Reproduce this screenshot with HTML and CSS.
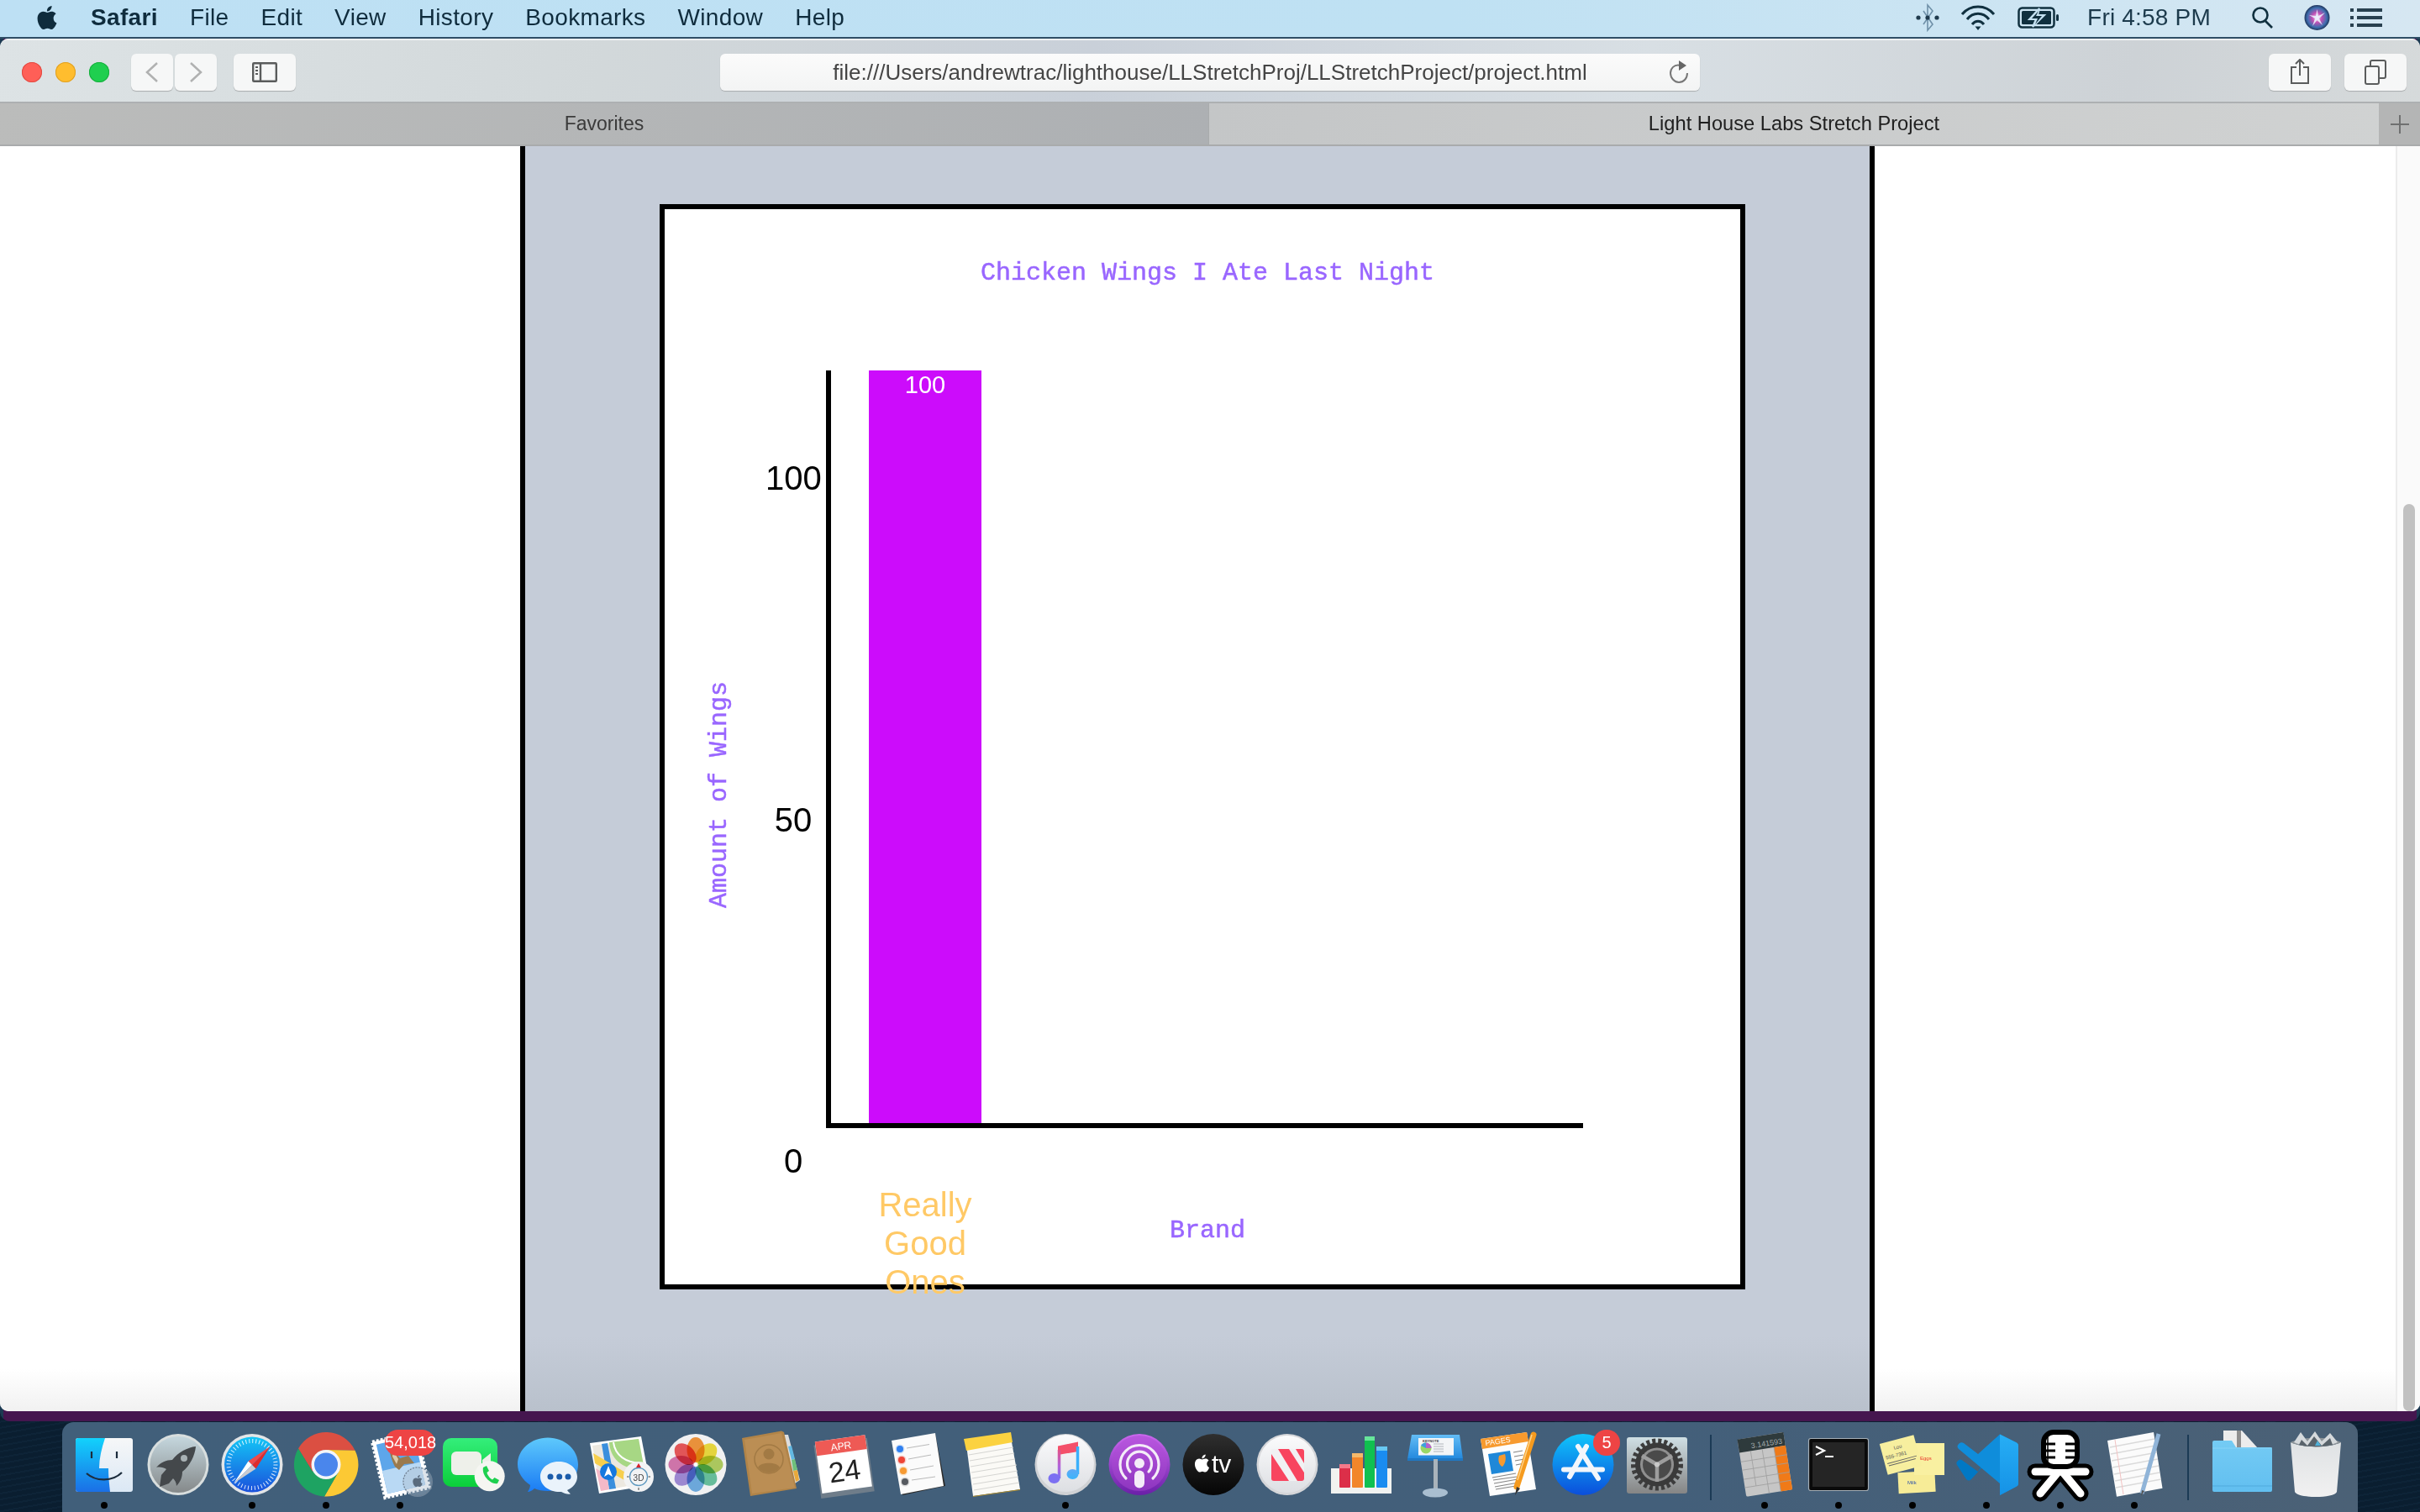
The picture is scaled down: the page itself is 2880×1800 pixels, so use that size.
FILE: index.html
```html
<!DOCTYPE html>
<html lang="en">
<head>
<meta charset="utf-8">
<title>Light House Labs Stretch Project</title>
<link rel="stylesheet" href="styles.css">
</head>
<body>
<svg class="defs" aria-hidden="true">
  <defs>
    <symbol id="apple" viewBox="0 0 24 24"><path d="M12.152 6.896c-.948 0-2.415-1.078-3.96-1.04-2.04.027-3.91 1.183-4.961 3.014-2.117 3.675-.546 9.103 1.519 12.09 1.013 1.454 2.208 3.09 3.792 3.039 1.52-.065 2.09-.987 3.935-.987 1.831 0 2.35.987 3.96.948 1.637-.026 2.676-1.48 3.676-2.948 1.156-1.688 1.636-3.325 1.662-3.415-.039-.013-3.182-1.221-3.22-4.857-.026-3.04 2.48-4.494 2.597-4.559-1.429-2.09-3.623-2.324-4.39-2.376-2-.156-3.675 1.09-4.61 1.09zM15.53 3.83c.843-1.012 1.4-2.427 1.245-3.83-1.207.052-2.662.805-3.532 1.818-.78.896-1.454 2.338-1.273 3.714 1.338.104 2.715-.688 3.559-1.701"/></symbol>
    <linearGradient id="gFinder" x1="0" y1="0" x2="0" y2="1"><stop offset="0" stop-color="#12d2fc"/><stop offset="1" stop-color="#1b6fe6"/></linearGradient>
    <linearGradient id="gFinderR" x1="0" y1="0" x2="0" y2="1"><stop offset="0" stop-color="#f6f7f8"/><stop offset="1" stop-color="#dbe8f5"/></linearGradient>
    <linearGradient id="gRocket" x1="0" y1="0" x2="0" y2="1"><stop offset="0" stop-color="#c5d7de"/><stop offset="1" stop-color="#85898a"/></linearGradient>
    <linearGradient id="gSafari" x1="0" y1="0" x2="0" y2="1"><stop offset="0" stop-color="#14c6f6"/><stop offset="1" stop-color="#1a50dc"/></linearGradient>
    <linearGradient id="gFace" x1="0" y1="0" x2="0" y2="1"><stop offset="0" stop-color="#34ee7b"/><stop offset="1" stop-color="#0bce3a"/></linearGradient>
    <linearGradient id="gMsg" x1="0" y1="0" x2="0" y2="1"><stop offset="0" stop-color="#5ec9fc"/><stop offset="1" stop-color="#1a7bf4"/></linearGradient>
    <linearGradient id="gNote" gradientUnits="userSpaceOnUse" x1="40" y1="18" x2="34" y2="66"><stop offset="0" stop-color="#f74a62"/><stop offset="0.55" stop-color="#b463d8"/><stop offset="1" stop-color="#6f7cf8"/></linearGradient>
    <linearGradient id="gNote2" x1="0" y1="0" x2="0" y2="1"><stop offset="0" stop-color="#5fa8f5"/><stop offset="1" stop-color="#3bb5fb"/></linearGradient>
    <linearGradient id="gPod" x1="0" y1="0" x2="0" y2="1"><stop offset="0" stop-color="#cb68ee"/><stop offset="1" stop-color="#6a1fa8"/></linearGradient>
    <linearGradient id="gTv" x1="0" y1="0" x2="0" y2="1"><stop offset="0" stop-color="#2f2f2f"/><stop offset="1" stop-color="#050505"/></linearGradient>
    <linearGradient id="gWhite" x1="0" y1="0" x2="0" y2="1"><stop offset="0" stop-color="#fbfbfc"/><stop offset="1" stop-color="#dddfe3"/></linearGradient>
    <linearGradient id="gStore" x1="0" y1="0" x2="0" y2="1"><stop offset="0" stop-color="#10c6fb"/><stop offset="1" stop-color="#0b4edb"/></linearGradient>
    <linearGradient id="gPrefs" x1="0" y1="0" x2="0" y2="1"><stop offset="0" stop-color="#cfdfe4"/><stop offset="1" stop-color="#858585"/></linearGradient>
    <linearGradient id="gFolder" x1="0" y1="0" x2="0" y2="1"><stop offset="0" stop-color="#74cbf4"/><stop offset="1" stop-color="#62bff0"/></linearGradient>
    <linearGradient id="gKey" x1="0" y1="0" x2="0" y2="1"><stop offset="0" stop-color="#63bdf6"/><stop offset="1" stop-color="#2288dd"/></linearGradient>
    <radialGradient id="gSiri" cx="0.5" cy="0.5" r="0.55"><stop offset="0" stop-color="#e8d8f2"/><stop offset="0.35" stop-color="#c24fb4"/><stop offset="0.7" stop-color="#3f6fb0"/><stop offset="1" stop-color="#121c38"/></radialGradient>
    <linearGradient id="gVs" x1="0" y1="0" x2="0" y2="1"><stop offset="0" stop-color="#27aef5"/><stop offset="1" stop-color="#1592e6"/></linearGradient>
    <linearGradient id="gTrash" x1="0" y1="0" x2="0" y2="1"><stop offset="0" stop-color="#dfe2e4"/><stop offset="1" stop-color="#f1f1f1"/></linearGradient>
  </defs>
</svg>

<header class="menubar">
  <svg class="apple-logo" viewBox="0 0 24 24"><use href="#apple"/></svg>
  <span class="menu-app">Safari</span>
  <nav class="menu-items"><span>File</span><span>Edit</span><span>View</span><span>History</span><span>Bookmarks</span><span>Window</span><span>Help</span></nav>
  <div class="status">
    <svg class="st-bt" viewBox="0 0 30 34" fill="none"><path d="M10 9 L21 25 L15 32 V2 L21 9 L10 25" stroke="#6f90a8" stroke-width="1.6"/><circle cx="4" cy="17" r="2.6" fill="#1f3a4d"/><circle cx="15" cy="17" r="2.6" fill="#1f3a4d"/><circle cx="26" cy="17" r="2.6" fill="#1f3a4d"/></svg>
    <svg class="st-wifi" viewBox="0 0 42 30" fill="none" stroke="#10303f" stroke-width="3"><path d="M2 11 C12 -1 30 -1 40 11"/><path d="M8 17 C15 8 27 8 34 17"/><path d="M14 23 C18 18 24 18 28 23"/><path d="M17.500 25.500 L21 30 L24.500 25.500 Z" fill="#10303f" stroke="none"/></svg>
    <svg class="st-batt" viewBox="0 0 50 26" fill="none"><rect x="1.500" y="1.500" width="42" height="23" rx="4" stroke="#10303f" stroke-width="2.500"/><rect x="5" y="5" width="35" height="16" rx="1.500" fill="#10303f"/><path d="M26 2 L14 15 H22 L18 24 L32 10 H24 Z" fill="#c4e1f1" stroke="#c4e1f1" stroke-width="2"/><path d="M25 5 L17 14 H24 L21 21 L29 11 H22 Z" fill="#10303f"/><rect x="46" y="9" width="3" height="8" rx="1.500" fill="#10303f"/></svg>
    <span class="st-time">Fri 4:58 PM</span>
    <svg class="st-search" viewBox="0 0 30 26" fill="none" stroke="#10303f" stroke-width="2.600"><circle cx="12" cy="10" r="8.500"/><path d="M18 17 L26 25"/></svg>
    <svg class="st-siri" viewBox="0 0 31 32"><circle cx="15.500" cy="16" r="15" fill="url(#gSiri)"/><path d="M15.500 6 L17 14 L25 10 L18 17 L22 25 L15.500 19 L10 26 L13 17 L6 13 L14 14 Z" fill="#eef6ff" opacity=".85"/></svg>
    <svg class="st-list" viewBox="0 0 38 24" fill="#28404f"><rect x="0" y="1" width="4" height="4"/><rect x="8" y="1" width="30" height="4"/><rect x="0" y="10" width="4" height="4"/><rect x="8" y="10" width="30" height="4"/><rect x="0" y="19" width="4" height="4"/><rect x="8" y="19" width="30" height="4"/></svg>
  </div>
</header>

<div class="stage">
  <div class="window">
    <div class="toolbar">
      <div class="tb-left">
        <div class="lights"><i class="light red"></i><i class="light yellow"></i><i class="light green"></i></div>
        <div class="navs">
          <button class="btn nav"><svg viewBox="0 0 16 26" fill="none" stroke="#b0b1b1" stroke-width="2.500"><path d="M14 2 L2 13 L14 24"/></svg></button>
          <button class="btn nav"><svg viewBox="0 0 16 26" fill="none" stroke="#b0b1b1" stroke-width="2.500"><path d="M2 2 L14 13 L2 24"/></svg></button>
        </div>
        <button class="btn wide"><svg class="ic-side" viewBox="0 0 30 24" fill="none" stroke="#5a5c5c" stroke-width="2.400"><rect x="1.200" y="1.200" width="27.600" height="21.600" rx="1"/><path d="M10 1 V23"/><path d="M4 6 H7 M4 10 H7 M4 14 H7" stroke-width="1.800"/></svg></button>
      </div>
      <div class="urlbar">
        <span class="url">file:///Users/andrewtrac/lighthouse/LLStretchProj/LLStretchProject/project.html</span>
        <svg class="reload" viewBox="0 0 24 28" fill="none"><path d="M14 6 C6 4 2 10 2 15 C2 21 7 26 12 26 C18 26 22 21 22 15" stroke="#777" stroke-width="2"/><path d="M12 0 L21 6 L12 12 Z" fill="#666"/></svg>
      </div>
      <div class="tb-right">
        <button class="btn wide"><svg class="ic-share" viewBox="0 0 24 30" fill="none" stroke="#5a5c5c" stroke-width="2"><path d="M8 10 H2 V29 H22 V10 H16"/><path d="M12 20 V1 M7 6 L12 1 L17 6"/></svg></button>
        <button class="btn wide"><svg class="ic-tabs" viewBox="0 0 26 30" fill="none" stroke="#5a5c5c" stroke-width="2"><rect x="1" y="8" width="16" height="21" rx="2"/><path d="M7 7 V3 A2 2 0 0 1 9 1 H23 A2 2 0 0 1 25 3 V20 A2 2 0 0 1 23 22 H18"/></svg></button>
      </div>
    </div>
    <div class="tabbar">
      <div class="tab">Favorites</div>
      <div class="tab active">Light House Labs Stretch Project</div>
      <div class="tab-add"><svg viewBox="0 0 22 22" stroke="#6f7070" stroke-width="2"><path d="M11 0 V22 M0 11 H22"/></svg></div>
    </div>
    <main class="viewport">
      <div class="page-wrap">
        <section class="page">
          <div class="card">
            <div class="corner"></div>
            <h1 class="chart-title">Chicken Wings I Ate Last Night</h1>
            <div class="y-side">
              <div class="y-label">Amount of Wings</div>
              <div class="ticks"><span>100</span><span>50</span><span>0</span></div>
            </div>
            <div class="plot">
              <div class="bar">100</div>
            </div>
            <div class="corner"></div>
            <div class="x-side">
              <div class="x-label">Brand</div>
              <div class="bar-label">Really Good Ones</div>
            </div>
          </div>
        </section>
      </div>
      <aside class="scrollbar"><div class="thumb"></div></aside>
    </main>
  </div>
</div>

<div class="desk">
  <footer class="dock">
    <div class="tile on"><svg viewBox="0 0 88 88"><rect x="10" y="12" width="68" height="64" rx="3" fill="url(#gFinderR)"/><path d="M13 12 H45 C41 24 38 36 38 48 H49 C49 58 50 67 51 76 H13 A3 3 0 0 1 10 73 V15 A3 3 0 0 1 13 12 Z" fill="url(#gFinder)"/><path d="M29 28 V36 M59 28 V36" stroke="#1c2c3c" stroke-width="2.200" fill="none"/><path d="M23 54 C34 64 54 64 65 53" stroke="#1c2c3c" stroke-width="2.200" fill="none"/></svg></div>
    <div class="tile"><svg viewBox="0 0 88 88"><circle cx="44" cy="43.500" r="36.500" fill="#d8dede"/><circle cx="44" cy="43.500" r="33.500" fill="url(#gRocket)"/><path d="M65 22 C55 23 44 29 37 38 C30 38 23 41 18 47 C22 46 27 47 30 49 L24 56 L22 70 L33 66 L38 60 C40 62 42 65 42 69 C47 64 49 58 49 52 C58 45 64 33 65 22 Z" fill="#44484b"/><circle cx="51" cy="36" r="4" fill="#a8b1b4"/></svg></div>
    <div class="tile on"><svg viewBox="0 0 88 88"><circle cx="44" cy="43.500" r="36.500" fill="#e3e5e7"/><circle cx="44" cy="43.500" r="33" fill="url(#gSafari)"/><circle cx="44" cy="43.500" r="28" fill="none" stroke="#fff" stroke-width="5" stroke-dasharray="1 3" opacity=".85"/><polygon points="65.700,21.700 48.500,48.500 44,44" fill="#e02b2b"/><polygon points="65.700,21.700 44,44 39.500,39.500" fill="#f04a4a"/><polygon points="22,66 39.500,39.500 44,44" fill="#fff"/><polygon points="22,66 44,44 48.500,48.500" fill="#c9cbd0"/></svg></div>
    <div class="tile on"><svg viewBox="0 0 88 88"><path d="M44 26 L78.500 26.700 A38 38 0 0 0 11 24.500 L28 52 Z" fill="#db4f42"/><path d="M78.500 26.700 A38 38 0 0 1 42 81.500 L59 52 L44 26 Z" fill="#fcc934"/><path d="M11 24.500 A38 38 0 0 0 42 81.500 L59 52 L28 52 Z" fill="#1ea362"/><circle cx="44" cy="43.500" r="17.500" fill="#f4f5f8"/><circle cx="44" cy="43.500" r="14" fill="#4a86ec"/></svg></div>
    <div class="tile on">
      <svg viewBox="0 0 88 88"><g transform="rotate(-13 44 44)"><rect x="18" y="10" width="54" height="68" fill="#fff" stroke="#fff" stroke-width="4" stroke-dasharray="3 2"/><rect x="22" y="14" width="46" height="60" fill="#5da6ea"/><rect x="22" y="46" width="46" height="28" fill="#b9d9f4"/></g><path d="M30 16 C33 20 35 25 38 29 L44 36 L54 33 L61 42 L49 43 L43 50 L38 46 C34 38 31 28 30 16 Z" fill="#9a7a4e"/><path d="M36 27 L42 37 L40 43 L35 34 Z" fill="#dccaa9"/><circle cx="65" cy="64" r="18" fill="#a9bccd" opacity=".4"/><circle cx="65" cy="64" r="17" fill="none" stroke="#6d7f92" stroke-width="1.200" stroke-dasharray="2 1.500"/><use href="#apple" x="58" y="56" width="14" height="14" fill="#5a6b7d"/></svg>
      <span class="badge mail-badge">54,018</span>
    </div>
    <div class="tile"><svg viewBox="0 0 88 88"><rect x="7" y="12" width="65" height="58" rx="10" fill="url(#gFace)"/><rect x="17" y="28" width="36" height="28" rx="6" fill="#eef0ea"/><path d="M54 38 L64 30 V56 L54 48 Z" fill="#eef0ea"/><circle cx="62.700" cy="57.300" r="18" fill="#f5f6f2"/><path d="M55 47 L59 45 L62 51 L59.500 53 C60 56 63 60 66 61.500 L68.500 59 L74 62 L72 66 C65 68 53 57 55 47 Z" fill="#1ed04f"/></svg></div>
    <div class="tile"><svg viewBox="0 0 88 88"><path d="M44 11.500 C64 11.500 80 25.500 80 43.500 C80 61 64 75 44 75 C38 75 32 74 28 72 C25 75 21 76.500 20 76 C22 73 23 70 23 68 C14 62 8 53 8 43.500 C8 25.500 24 11.500 44 11.500 Z" fill="url(#gMsg)"/><path d="M57 40 C69 40 79 47.500 79 58 C79 65 74 71 67 74 C68 76 70 77 71 78.500 C68 79 63 78 60 76 C47 77 35 69 35 58 C35 47.500 45 40 57 40 Z" fill="#eaf3fb"/><circle cx="47" cy="58" r="3.500" fill="#1a5cab"/><circle cx="57.700" cy="58" r="3.500" fill="#1a5cab"/><circle cx="68" cy="58" r="3.500" fill="#1a5cab"/></svg></div>
    <div class="tile"><svg viewBox="0 0 88 88"><polygon points="6,18 67,10 78,68 17,78" fill="#fff"/><polygon points="9,21 64,13 74,65 19,75" fill="#ece8e0"/><path d="M29 17 C30 36 44 50 71 50 L64 13 Z" fill="#a7d784"/><path d="M34 17 C36 32 48 42 69 42" stroke="#fff" fill="none" stroke-width="2"/><polygon points="20,19 27,18 37,72 29,73" fill="#3a8fdd"/><polygon points="10,30 50,54 47,62 12,42" fill="#f7cf4e"/><polygon points="13,48 26,56 29,73 19,75" fill="#f5b9c8"/><circle cx="28" cy="52" r="10" fill="#1478e0"/><path d="M28 45 L33 58 L28 55 L23 58 Z" fill="#fff"/><circle cx="64" cy="58" r="18" fill="#f2f3f4"/><circle cx="64" cy="58" r="10.500" fill="none" stroke="#5d98bf" stroke-width="1.300"/><text class="t-3d" x="64" y="62.500" text-anchor="middle">3D</text><polygon points="64,42 67,47 61,47" fill="#d8222a"/><path d="M50 58 H52.500 M75.500 58 H78 M64 71 V74" stroke="#444" stroke-width="1"/></svg></div>
    <div class="tile"><svg viewBox="0 0 88 88"><circle cx="44" cy="43.500" r="36.500" fill="#f1f1f2"/><g class="petals"><ellipse cx="44" cy="26" rx="10.500" ry="15" fill="#f79a3e"/><ellipse cx="44" cy="26" rx="10.500" ry="15" fill="#f2e141" transform="rotate(45 44 43.500)"/><ellipse cx="44" cy="26" rx="10.500" ry="15" fill="#b5d363" transform="rotate(90 44 43.500)"/><ellipse cx="44" cy="26" rx="10.500" ry="15" fill="#6cc7a2" transform="rotate(135 44 43.500)"/><ellipse cx="44" cy="26" rx="10.500" ry="15" fill="#72b1e6" transform="rotate(180 44 43.500)"/><ellipse cx="44" cy="26" rx="10.500" ry="15" fill="#a48fdb" transform="rotate(225 44 43.500)"/><ellipse cx="44" cy="26" rx="10.500" ry="15" fill="#da7bb2" transform="rotate(270 44 43.500)"/><ellipse cx="44" cy="26" rx="10.500" ry="15" fill="#ee5a5c" transform="rotate(315 44 43.500)"/></g><circle cx="44" cy="43.500" r="1.800" fill="#fff"/></svg></div>
    <div class="tile"><svg viewBox="0 0 88 88"><polygon points="58,8 66,8 80,62 74,66" fill="#ddd"/><polygon points="66,22 70,21 74,37 70,38" fill="#63b9e3"/><polygon points="70,38 74,37 77,50 72,51" fill="#6ec07b"/><polygon points="72,51 77,50 79,62 75,64" fill="#e9a93a"/><polygon points="11,12 58,3.500 61,5 76,72 21,81" fill="#b18448"/><polygon points="14,14 58,6 74,71 23,78" fill="#bb8e54"/><circle cx="43" cy="37" r="17" fill="none" stroke="#a27a44" stroke-width="1.500"/><circle cx="43" cy="31" r="6.500" fill="#a27a44"/><path d="M30 47 C33 40 53 40 56 47 A17 17 0 0 1 30 47 Z" fill="#a27a44"/></svg></div>
    <div class="tile"><svg viewBox="0 0 88 88"><g transform="rotate(-8 44 44)"><rect x="12" y="16" width="64" height="64" fill="#6f7d8a"/><rect x="14" y="12" width="60" height="62" fill="#fff"/><rect x="14" y="12" width="60" height="17" fill="#ee5a55"/><text class="t-apr" x="44" y="25.500" text-anchor="middle">APR</text><text class="t-cal" x="44" y="63" text-anchor="middle">24</text></g></svg></div>
    <div class="tile"><svg viewBox="0 0 88 88"><polygon points="16,17 65,6.500 77,69 26,80" fill="#2a2a2a"/><polygon points="13,15 65,6 75,69 24,79" fill="#fbfbfb"/><circle cx="23" cy="25" r="5.500" fill="#cfe0f5"/><circle cx="23" cy="25" r="4" fill="#2f7ff0"/><circle cx="25" cy="38" r="5.500" fill="#f7d0cc"/><circle cx="25" cy="38" r="4" fill="#ef4537"/><circle cx="27" cy="51" r="5.500" fill="#fbe2c4"/><circle cx="27" cy="51" r="4" fill="#f69a33"/><circle cx="29" cy="64" r="5.500" fill="#dadada"/><circle cx="29" cy="64" r="4" fill="#565a60"/><path d="M31 24 L58 19.500 M33 37 L60 32 M35 50 L63 45 M37 62 L65 58" stroke="#b9b9b9" stroke-width="1"/></svg></div>
    <div class="tile"><svg viewBox="0 0 88 88"><polygon points="14,20 67,11 78,73 22,81" fill="#fbfaf6"/><polygon points="22,81 78,73 78,74 22,82" fill="#b08f30"/><polygon points="11,13 67,5 69,17 14,27" fill="#fbd240"/><path d="M17 32 L70 23 M18 39 L71 30 M19 46 L72 37 M20 53 L74 44 M21 60 L75 51 M22 67 L76 58 M23 74 L77 65" stroke="#d5d5d2" stroke-width="1"/></svg></div>
    <div class="tile on"><svg viewBox="0 0 88 88"><circle cx="44" cy="43.500" r="36.500" fill="#cfd1d4"/><circle cx="44" cy="42" r="34" fill="url(#gWhite)"/><path d="M35 21.500 L59 16.500 V28 L35 32 Z" fill="#f4506a"/><path d="M36.500 26 V60" fill="none" stroke="url(#gNote)" stroke-width="3.500"/><path d="M58.500 22 V55" stroke="#3bb0fb" stroke-width="3.500"/><ellipse cx="30.500" cy="60" rx="7" ry="6" fill="#7c70f2"/><ellipse cx="52.500" cy="55" rx="7" ry="6" fill="url(#gNote2)"/></svg></div>
    <div class="tile"><svg viewBox="0 0 88 88"><circle cx="44" cy="43.500" r="36.500" fill="url(#gPod)"/><circle cx="44" cy="42" r="33" fill="#a948d2" opacity=".5"/><g fill="none" stroke="#f4ecf8" stroke-width="3.200" stroke-linecap="round"><path d="M28 60 A23 23 0 1 1 60 60"/><path d="M33 52 A14.500 14.500 0 1 1 55 52"/></g><circle cx="44" cy="42" r="6" fill="#f4ecf8"/><rect x="38" y="50.500" width="12" height="21" rx="6" fill="#f4ecf8"/></svg></div>
    <div class="tile"><svg viewBox="0 0 88 88"><circle cx="44" cy="43.500" r="36.500" fill="url(#gTv)"/><use href="#apple" x="20" y="30" width="21" height="24" fill="#fff"/><text class="t-tv" x="42" y="53">tv</text></svg></div>
    <div class="tile"><svg viewBox="0 0 88 88"><circle cx="44" cy="43.500" r="36.500" fill="#d5d6d9"/><circle cx="44" cy="43" r="34" fill="url(#gWhite)"/><rect x="25" y="25" width="39" height="38" rx="3" fill="#f8455f"/><path d="M25 31 L46 63 H56 L33 25 H25 Z M46 25 L64 53 V42 L54 25 Z" fill="#f1f1f3"/></svg></div>
    <div class="tile"><svg viewBox="0 0 88 88"><rect x="8" y="48" width="72" height="30" fill="#f1f2f0"/><rect x="18" y="43" width="13" height="28" rx="1" fill="#dc2f49"/><rect x="18" y="43" width="13" height="5" fill="#f4798a"/><rect x="33" y="30" width="13" height="41" rx="1" fill="#f2862a"/><rect x="33" y="30" width="13" height="5" fill="#f5b96a"/><rect x="48" y="10" width="12" height="61" rx="1" fill="#10c050"/><rect x="48" y="10" width="12" height="5" fill="#66e69a"/><rect x="62" y="22" width="13" height="49" rx="1" fill="#1a8cf0"/><rect x="62" y="22" width="13" height="5" fill="#68c8f2"/></svg></div>
    <div class="tile"><svg viewBox="0 0 88 88"><polygon points="16,8 73,8 77,37 11,37" fill="url(#gKey)"/><rect x="11" y="36" width="66" height="3" fill="#1f78c4"/><rect x="24" y="12" width="42" height="20.500" fill="#f3f5f7"/><text class="t-key" x="29" y="16.500">KEYNOTE</text><circle cx="33" cy="24" r="6.500" fill="#9ad766"/><path d="M33 24 L33 17.500 A6.500 6.500 0 0 1 39.500 24 Z" fill="#b762cc"/><path d="M33 24 L27 21 A6.500 6.500 0 0 1 33 17.500 Z" fill="#3d9fdf"/><path d="M42 19 H54 M42 22 H54 M42 25 H54 M42 28 H54" stroke="#b1b5bb" stroke-width="1"/><rect x="42" y="37" width="5" height="36" fill="#a9b3bb"/><ellipse cx="44" cy="77" rx="15" ry="5.500" fill="#a9bed0"/></svg></div>
    <div class="tile"><svg viewBox="0 0 88 88"><polygon points="10,13 65,5 76,73 21,81" fill="#fdfdfd"/><polygon points="10,13 65,5 67,16 12,25" fill="#f79a2e"/><text class="t-pages" transform="rotate(-8 16 21)" x="16" y="21">PAGES</text><polygon points="19,31 45,27 49,51 23,55" fill="#1f88d8"/><path d="M32 33 L39 31 C41 37 39 43 36 46 C33 45 30 40 32 33 Z" fill="#f79a2e"/><path d="M49 29 L60 27 M50 34 L61 32 M51 39 L62 37 M52 44 L62 42 M24 59 L52 54 M25 62 L53 58 M26 66 L54 61 M27 70 L55 65 M28 73 L52 69" stroke="#858585" stroke-width="1.200"/><path d="M73 8 L53 70" stroke="#f59a1e" stroke-width="7" stroke-linecap="round"/><path d="M53 70 L51 80 L57 72 Z" fill="#333"/><path d="M71 8 L54 62" stroke="#fdd288" stroke-width="1.500"/></svg></div>
    <div class="tile">
      <svg viewBox="0 0 88 88"><circle cx="44" cy="43.500" r="36.500" fill="url(#gStore)"/><g stroke="#f2f6fb" stroke-width="6" stroke-linecap="round" fill="none"><path d="M48 22 L28 58"/><path d="M38 22 L62 60"/><path d="M21 49.500 H67"/></g></svg>
      <span class="badge store-badge">5</span>
    </div>
    <div class="tile"><svg viewBox="0 0 88 88"><rect x="8" y="11" width="72" height="67" rx="3" fill="url(#gPrefs)"/><circle cx="44" cy="43.500" r="28" fill="none" stroke="#3d3d3d" stroke-width="6" stroke-dasharray="4 3"/><circle cx="44" cy="43.500" r="26" fill="#3a3a3a"/><circle cx="44" cy="43.500" r="20" fill="#8f8f8f"/><circle cx="44" cy="43.500" r="17" fill="#4a4a4a"/><g stroke="#9d9d9d" stroke-width="4.500"><path d="M44 43.500 L44 64 M44 43.500 L26 33 M44 43.500 L62 33"/></g><circle cx="44" cy="43.500" r="3" fill="#c9c9c9"/></svg></div>
    <div class="sep"></div>
    <div class="tile on"><svg viewBox="0 0 88 88"><g transform="rotate(-9 44 43)"><rect x="16.500" y="9" width="55.500" height="69" rx="2" fill="#c6c6c6"/><rect x="16.500" y="9" width="55.500" height="16" fill="#2e3a3c"/><text class="t-calc" x="69" y="22" text-anchor="end">3.141593</text><rect x="58" y="25" width="14" height="53" fill="#f07a18"/><g stroke="#9f9f9f" stroke-width=".8"><path d="M16.500 36 H72 M16.500 46 H72 M16.500 57 H72 M16.500 67 H72 M30 25 V67 M44 25 V78 M58 25 V78"/></g></g></svg></div>
    <div class="tile on"><svg viewBox="0 0 88 88"><rect x="8.500" y="12.500" width="71" height="62" rx="2.500" fill="#0a0a0a" stroke="#a4aeb6" stroke-width="1.200"/><rect x="13" y="17" width="62" height="53" fill="#252525"/><path d="M17 22 L27 27 L17 32" stroke="#fff" stroke-width="2.200" fill="none"/><path d="M28 34 H38" stroke="#fff" stroke-width="2"/></svg></div>
    <div class="tile on"><svg viewBox="0 0 88 88"><rect x="27" y="52" width="44" height="25" fill="#f7ec97" transform="rotate(-3 49 64)"/><text class="t-stk t-blue" x="38" y="67">Milk</text><rect x="46" y="18" width="36" height="38" fill="#f9f0a1"/><text class="t-stk t-red" x="53" y="38">Eggs</text><g transform="rotate(-15 30 32)"><rect x="9" y="13" width="42" height="38" fill="#f7ef9f"/><text class="t-stk" x="24" y="24">Lou</text><text class="t-stk" x="12" y="33">555-7361</text><path d="M12 38 H48 M13 41 H46" stroke="#666" stroke-width="1"/></g></svg></div>
    <div class="tile on"><svg viewBox="0 0 88 88"><path d="M9 44 C8 42 8 41 10 39 C12 37 14 37 16 39 L34 52 L60 7.500 L60 24 L26 61 C24 63 22 63 20 61 Z" fill="#0078c4"/><path d="M60 7.500 L34 31 L17 18 C15 17 13 17 11 19 C9 21 9 23 11 25 L60 66 V80 L79 70 C81 69 82 68 82 66 V21 C82 19 81 18 79 17 Z" fill="#0f8ddb"/><path d="M60 7.500 L79 17 C81 18 82 19 82 21 V66 C82 68 81 69 79 70 L60 80 Z" fill="url(#gVs)"/></svg></div>
    <div class="tile on"><svg viewBox="0 0 88 88"><g fill="none" stroke-linecap="round"><path d="M14 52 H74" stroke="#000" stroke-width="19"/><path d="M40 54 L20 78 M48 54 L68 78" stroke="#000" stroke-width="19"/><path d="M14 52 H74" stroke="#fff" stroke-width="9"/><path d="M40 54 L20 78 M48 54 L68 78" stroke="#fff" stroke-width="9"/></g><rect x="24" y="5" width="40" height="41" rx="12" fill="#fff" stroke="#000" stroke-width="6"/><path d="M22 19 H38 M50 19 H66 M22 27 H38 M50 27 H66 M22 35 H38 M50 35 H66" stroke="#000" stroke-width="3"/><path d="M29 6 V45" stroke="#000" stroke-width="1.500"/></svg></div>
    <div class="tile on"><svg viewBox="0 0 88 88"><polygon points="12,15 67,5 77.500,71.700 23,81.700" fill="#fbfbfb"/><path d="M15 23 L68 13 M16 31 L69 21 M17 39 L71 29 M18 47 L72 37 M20 55 L73 45 M21 63 L74 53 M22 71 L76 61" stroke="#dadada" stroke-width="1.300"/><path d="M21 14 L31 79" stroke="#f3c3c3" stroke-width="1"/><path d="M73 7 L53 78" stroke="#90b4d8" stroke-width="5"/><path d="M53 74 L52 81 L56 75 Z" fill="#555"/></svg></div>
    <div class="sep"></div>
    <div class="tile"><svg viewBox="0 0 88 88"><polygon points="22,3 44,3 63,24 63,40 22,40" fill="#ececec"/><rect x="38" y="3" width="5" height="37" fill="#8f8f8f"/><path d="M11 15 H32 L37 23 H78 A2 2 0 0 1 80 25 V74 A2 2 0 0 1 78 76 H11 A2 2 0 0 1 9 74 V17 A2 2 0 0 1 11 15 Z" fill="url(#gFolder)"/><path d="M9 24 H80" stroke="#85d3f7" stroke-width="1"/><path d="M9 69 H80" stroke="#4ea9dc" stroke-width="1"/></svg></div>
    <div class="tile"><svg viewBox="0 0 88 88"><path d="M14 17 C28 24 60 24 74 17 L69 76 C66 84 22 84 19 76 Z" fill="url(#gTrash)"/><path d="M14 17 C28 10 60 10 74 17 C60 24 28 24 14 17 Z" fill="#8d9499"/><path d="M18 17 L26 5 L34 16 L43 4 L51 16 L61 6 L70 17 C58 23 30 23 18 17 Z" fill="#d5d9dc"/><path d="M27 14 L34 21 L42 10 L51 21 L61 12 L64 20 C50 23 36 23 24 20 Z" fill="#59636b"/><path d="M46 15 L50 21 L43 21 Z" fill="#4fb0d8"/></svg></div>
  </footer>
</div>
</body>
</html>
```

FILE: styles.css
```css
* { box-sizing: border-box; }
html, body { margin: 0; padding: 0; }
body {
  width: 2880px;
  height: 1800px;
  overflow: hidden;
  display: flex;
  flex-direction: column;
  font-family: "Liberation Sans", Arial, sans-serif;
  background:
    repeating-linear-gradient(170deg, rgba(60,110,150,.07) 0 2px, rgba(0,0,0,0) 2px 7px),
    #0a1e30;
}
.defs { display: block; width: 0; height: 0; flex: none; }

/* menu bar */
.menubar {
  flex: none;
  height: 46px;
  display: flex;
  align-items: center;
  padding: 0 45px 2px 42px;
  color: #0f2c3d;
  font-size: 28px;
  letter-spacing: .35px;
  background: linear-gradient(90deg, #bde0f4 0%, #bfe1f3 60%, #d6e7f2 100%);
  border-bottom: 2px solid #2f4e66;
}
.apple-logo { width: 28px; height: 34px; fill: #0f2c3d; margin-right: 38px; }
.menu-app { font-weight: 700; margin-right: 38px; }
.menu-items { display: flex; gap: 38px; }
.status { margin-left: auto; display: flex; align-items: center; }
.st-bt { width: 30px; height: 34px; }
.st-wifi { width: 42px; height: 30px; margin-left: 24px; }
.st-batt { width: 50px; height: 26px; margin-left: 26px; }
.st-time { margin-left: 33px; color: #1c3a4c; letter-spacing: .2px; }
.st-search { width: 34px; height: 26px; margin-left: 45px; }
.st-siri { width: 31px; height: 32px; margin-left: 32px; }
.st-list { width: 38px; height: 24px; margin-left: 24px; }

/* window */
.stage {
  flex: none;
  padding-bottom: 12px;
  border-radius: 0 0 12px 12px;
  background:
    linear-gradient(#45164f, #45164f) center bottom / calc(100% - 8px) 100% no-repeat,
    #1c3a52;
}
.window {
  height: 1634px;
  display: flex;
  flex-direction: column;
  overflow: hidden;
  border-radius: 10px;
  background: #fff;
}
.toolbar {
  flex: none;
  height: 77px;
  padding-top: 18px;
  display: grid;
  grid-template-columns: 1fr 1166px 1fr;
  background: linear-gradient(100deg, #dde3e5 0%, #d2d8da 25%, #c9d0d9 45%, #d8dfe4 68%, #cdd2d6 88%, #d6dadb 100%);
  border-top: 2px solid #eef0f1;
  border-bottom: 2px solid #adb0b2;
}
.tb-left { display: flex; padding-left: 26px; margin-top: -2px; }
.tb-right { display: flex; justify-content: flex-end; gap: 16px; padding-right: 16px; margin-top: -2px; }
.lights { display: flex; gap: 16px; margin-top: 10px; margin-right: 26px; }
.light { width: 24px; height: 24px; border-radius: 50%; }
.red { background: #ff5f57; box-shadow: inset 0 0 0 1px #e14a42; }
.yellow { background: #ffbd2e; box-shadow: inset 0 0 0 1px #dfa023; }
.green { background: #1fcf4f; box-shadow: inset 0 0 0 1px #18ae3e; }
.navs { display: flex; gap: 2px; margin-right: 20px; }
.btn {
  display: flex;
  align-items: center;
  justify-content: center;
  height: 44px;
  padding: 0;
  border: 0;
  border-radius: 6px;
  background: #f6f7f7;
  box-shadow: 0 1px 1px #a9acae;
}
.nav { width: 50px; }
.nav svg { width: 16px; height: 26px; }
.wide { width: 74px; }
.ic-side { width: 30px; height: 24px; }
.ic-share { width: 24px; height: 30px; margin-bottom: 2px; }
.ic-tabs { width: 26px; height: 30px; }
.urlbar {
  height: 44px;
  margin-top: -2px;
  display: flex;
  align-items: center;
  position: relative;
  justify-content: center;
  border-radius: 6px;
  background: linear-gradient(#fbfbfb, #f3f4f4);
  box-shadow: 0 1px 1px #a9acae;
}
.url { font-size: 26px; color: #454545; }
.reload { position: absolute; right: 13px; top: 8px; width: 24px; height: 28px; }

/* tabs */
.tabbar {
  flex: none;
  height: 51px;
  display: flex;
  font-size: 23px;
  color: #3b3b3b;
  border-bottom: 2px solid #a9abac;
}
.tab {
  width: 1438px;
  display: flex;
  align-items: center;
  justify-content: center;
  background: linear-gradient(100deg, #bbbcbb, #adb0b3);
}
.tab.active {
  width: 1393px;
  color: #202020;
  font-size: 23.700px;
  border-left: 1px solid #a9abac;
  background: linear-gradient(100deg, #c4c6c7, #d0d2d2);
}
.tab-add {
  flex: 1;
  display: flex;
  align-items: center;
  justify-content: center;
  background: #b4b5b5;
}
.tab-add svg { width: 22px; height: 22px; }

/* page */
.viewport {
  flex: 1;
  min-height: 0;
  display: flex;
  background: linear-gradient(#fff calc(100% - 50px), #f1f1f1 100%);
}
.page-wrap { flex: 1; padding-left: 619px; }
.page {
  width: 1612px;
  height: 100%;
  padding: 69px 0 0 160px;
  border: solid #000;
  border-width: 0 6px;
  background: linear-gradient(#c5ccd8 calc(100% - 90px), #b9c1cc 100%);
}
.card {
  width: 1292px;
  height: 1292px;
  display: grid;
  grid-template-columns: 192px 908px;
  grid-template-rows: 192px 902px 186px;
  border: 6px solid #000;
  background: #fff;
}
.chart-title {
  margin: 59px 0 0;
  font: 400 30px/34px "Liberation Mono", "Courier New", monospace;
  -webkit-text-stroke: .5px #9966ff;
  color: #9966ff;
  text-align: center;
}
.y-side { display: flex; }
.y-label {
  width: 30px;
  height: 270px;
  margin: 370px 0 0 50px;
  writing-mode: vertical-rl;
  transform: rotate(180deg);
  text-align: center;
  white-space: nowrap;
  font: 400 30px/30px "Liberation Mono", "Courier New", monospace;
  -webkit-text-stroke: .5px #9966ff;
  color: #9966ff;
}
.ticks {
  width: 66px;
  height: 859px;
  margin: 105px 0 0 40px;
  display: flex;
  flex-direction: column;
  justify-content: space-between;
  text-align: center;
  font-size: 40px;
  line-height: 46px;
  color: #000;
}
.plot {
  width: 901px;
  border-left: 6px solid #000;
  border-bottom: 6px solid #000;
  padding-left: 45px;
}
.bar {
  width: 134px;
  height: 896px;
  background: #cc0cfb;
  color: #fff;
  font-size: 29px;
  line-height: 34px;
  text-align: center;
}
.x-side { display: grid; }
.x-label {
  grid-area: 1 / 1;
  margin-top: 105px;
  text-align: center;
  font: 400 30px/34px "Liberation Mono", "Courier New", monospace;
  -webkit-text-stroke: .5px #9966ff;
  color: #9966ff;
}
.bar-label {
  grid-area: 1 / 1;
  width: 134px;
  margin: 68px 0 0 51px;
  text-align: center;
  font-size: 40px;
  line-height: 46px;
  color: #ffc966;
  z-index: 1;
}
.scrollbar {
  flex: none;
  width: 29px;
  padding: 426px 7px 0 7px;
  background: #fafafa;
  border-left: 2px solid #ececec;
}
.thumb { width: 14px; height: 1080px; border-radius: 7px; background: #c1c1c1; }

/* dock */
.desk { flex: 1; padding: 1px 74px 0; }
.dock {
  height: 107px;
  padding: 7px 6px 0;
  display: flex;
  border-radius: 14px 14px 0 0;
  background: linear-gradient(90deg, #415f7a, #435f7a 70%, #4b6176);
}
.tile { position: relative; flex: none; width: 88px; height: 100px; }
.tile svg { display: block; width: 88px; height: 88px; }
.tile.on::after {
  content: "";
  position: absolute;
  left: 40px;
  top: 88px;
  width: 8px;
  height: 8px;
  border-radius: 50%;
  background: #000;
}
.sep { flex: none; width: 40px; position: relative; }
.sep::before {
  content: "";
  position: absolute;
  left: 19px;
  top: 8px;
  width: 2px;
  height: 78px;
  background: #1b3a55;
}
.badge {
  position: absolute;
  top: 2px;
  height: 31px;
  border-radius: 16px;
  background: #ee4444;
  color: #fff;
  font-size: 20px;
  line-height: 31px;
  text-align: center;
}
.mail-badge { left: 26px; width: 60px; }
.store-badge { left: 56px; width: 32px; }
.petals ellipse { mix-blend-mode: multiply; }
.dock text { font-family: "Liberation Sans", Arial, sans-serif; }
.t-3d { font-size: 10px; fill: #444; }
.t-apr { font-size: 12px; fill: #fff; }
.t-cal { font-size: 34px; fill: #222; }
.t-tv { font-size: 30px; fill: #fff; }
.t-key { font-size: 4px; font-weight: 700; fill: #444; }
.t-pages { font-size: 9px; fill: #fff; }
.t-calc { font-size: 9px; fill: #a5acae; }
.t-stk { font-size: 6px; fill: #555; }
.t-blue { fill: #3457a8; }
.t-red { fill: #e9372d; }
```
